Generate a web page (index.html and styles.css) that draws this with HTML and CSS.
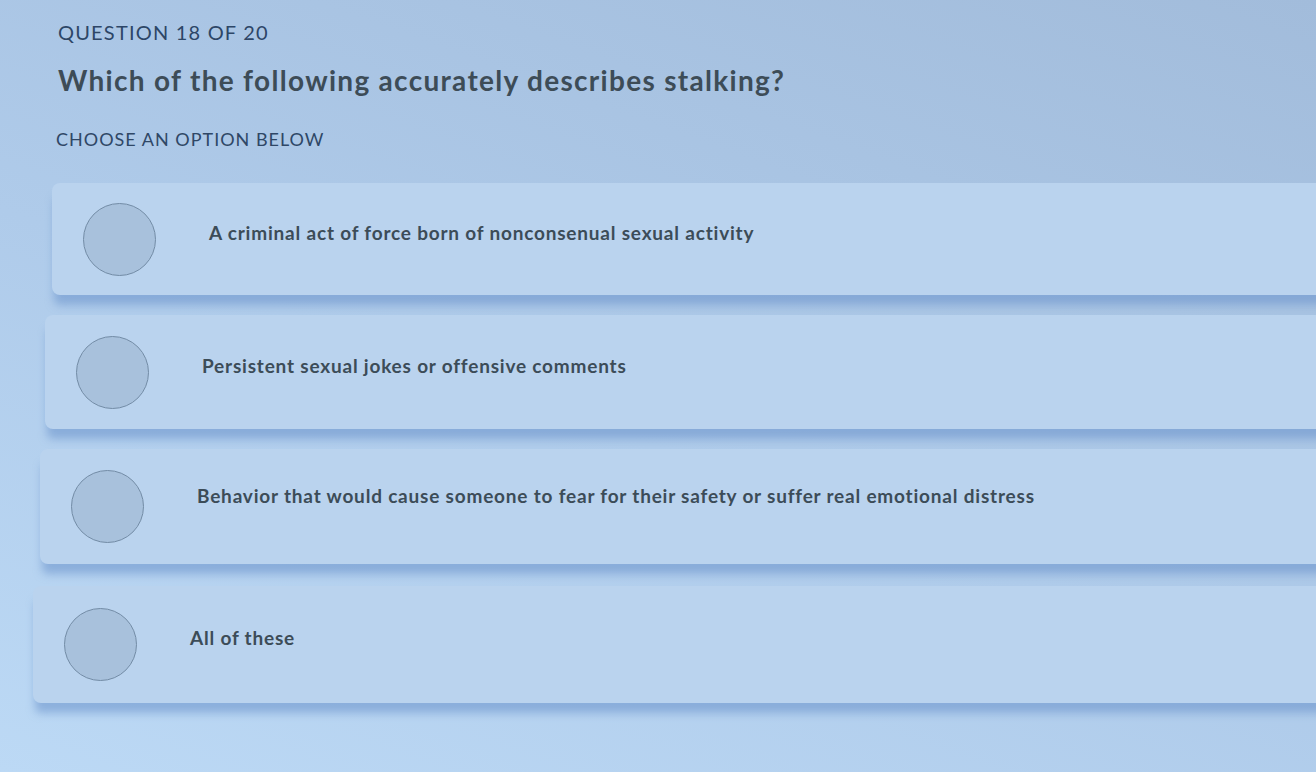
FILE: index.html
```html
<!DOCTYPE html>
<html lang="en">
<head>
<meta charset="UTF-8">
<meta name="viewport" content="width=device-width, initial-scale=1.0">
<title>Question 18 of 20</title>
<link rel="stylesheet" href="styles.css">
</head>
<body>

<div class="quiz">
    <!-- Question header -->
    <div class="quiz-head">
        <p class="counter">QUESTION 18 OF 20</p>
        <h1 class="question">Which of the following accurately describes stalking?</h1>
        <p class="hint">CHOOSE AN OPTION BELOW</p>
    </div>

    <!-- Answer options -->
    <div class="options">
        <label class="option">
            <span class="radio"></span>
            <span class="option-text">A criminal act of force born of nonconsenual sexual activity</span>
        </label>
        <label class="option">
            <span class="radio"></span>
            <span class="option-text">Persistent sexual jokes or offensive comments</span>
        </label>
        <label class="option">
            <span class="radio"></span>
            <span class="option-text">Behavior that would cause someone to fear for their safety or suffer real emotional distress</span>
        </label>
        <label class="option">
            <span class="radio"></span>
            <span class="option-text">All of these</span>
        </label>
    </div>
</div>

</body>
</html>
```

FILE: styles.css
```css
/* Basic Reset */
* {
    margin: 0;
    padding: 0;
    box-sizing: border-box;
}

html, body {
    height: 100%;
}

body {
    background: linear-gradient(20deg, #bcd9f5 0%, #afcbea 45%, #a2bcdb 100%);
    font-family: Lato, "Open Sans", Arial, sans-serif;
    color: #3b4b58;
    overflow: hidden;
}

/* Header */
.quiz-head {
    padding: 20px 0 0 58px;
}

.counter {
    font-size: 20px;
    color: #2d4667;
    letter-spacing: 1.2px;
    line-height: 24px;
}

.question {
    margin-top: 19px;
    font-size: 28px;
    font-weight: 700;
    color: #3d4c57;
    letter-spacing: 1.3px;
    line-height: 34px;
}

.hint {
    margin-top: 31px;
    margin-left: -2px;
    font-size: 18px;
    color: #2f4766;
    letter-spacing: 1px;
    line-height: 22px;
}

/* Option cards */
.options {
    margin-top: 33px;
    display: flex;
    flex-direction: column;
    gap: 20px;
}

.option {
    display: flex;
    align-items: center;
    height: 112px;
    margin-right: -40px;
    background: #bad3ee;
    border-radius: 8px;
    box-shadow: 0 12px 8px -2px rgba(110, 150, 205, 0.6);
    cursor: pointer;
}

/* the screen leans a little, so every card starts a bit further left */
.option:nth-child(1) { margin-left: 52px; }
.option:nth-child(2) { margin-left: 45px; height: 114px; }
.option:nth-child(3) { margin-left: 40px; height: 115px; }
.option:nth-child(4) { margin-left: 33px; height: 117px; margin-top: 2px; }

.option:nth-child(3) .option-text { margin-top: -22px; }

.radio {
    flex: none;
    width: 73px;
    height: 73px;
    margin-left: 31px;
    margin-right: 53px;
    border-radius: 50%;
    border: 1.5px solid #738ca6;
    background: #a8c1dc;
}

.option-text {
    font-size: 19px;
    font-weight: 700;
    color: #3c4c58;
    letter-spacing: 0.8px;
    margin-top: -14px;
}
```
